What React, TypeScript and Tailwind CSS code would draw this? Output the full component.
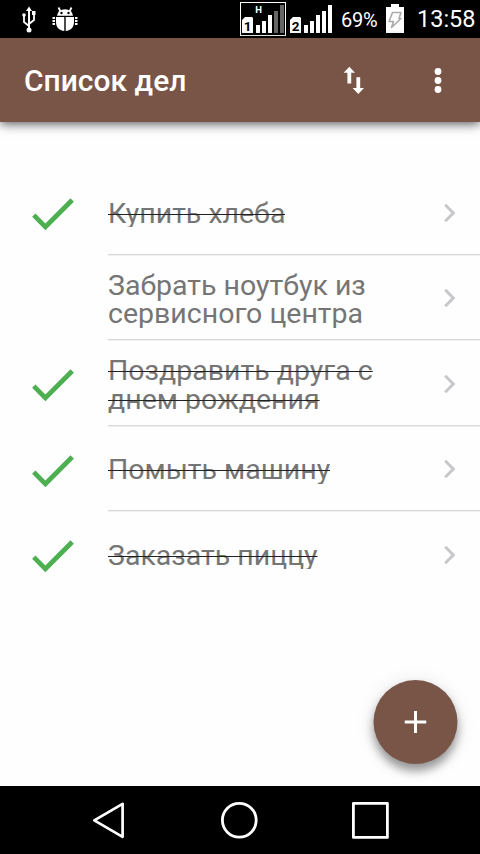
import { clsx } from "clsx";

type Task = { id: string; lines: string[]; done: boolean };

const TASKS: Task[] = [
	{ id: "bread", lines: ["Купить хлеба"], done: true },
	{
		id: "laptop",
		lines: ["Забрать ноутбук из", "сервисного центра"],
		done: false,
	},
	{
		id: "birthday",
		lines: ["Поздравить друга с", "днем рождения"],
		done: true,
	},
	{ id: "car", lines: ["Помыть машину"], done: true },
	{ id: "pizza", lines: ["Заказать пиццу"], done: true },
];

function UsbIcon() {
	return (
		<svg className="h-[27px] w-4" viewBox="0 0 16 27" fill="none" stroke="#fff">
			<path d="M8 3v20" strokeWidth={2} />
			<path d="M8 20l-5-4V9M8 18l5-4V8" strokeWidth={1.8} />
			<path d="M8 .5l3 4.500H5z" fill="#fff" stroke="none" />
			<circle cx="8" cy="24" r="2.500" fill="#fff" stroke="none" />
			<circle cx="3" cy="9" r="1.800" fill="#fff" stroke="none" />
			<path d="M11 5h3.500v4H11z" fill="#fff" stroke="none" />
		</svg>
	);
}

function BugIcon() {
	return (
		<svg className="h-[26px] w-[26px]" viewBox="0 0 26 26" fill="#fff">
			<path d="M5 9.800a8 6.500 0 0 1 16 0z" />
			<path d="M8.500 5.500L6.500 1.500M17.500 5.500l2-4" stroke="#fff" strokeWidth={1.8} />
			<path d="M4 11h8.300v14C7 24.500 4 21 4 16zM13.700 11H22v5c0 5-3 8.500-8.300 9z" />
			<path
				d="M.5 12h2.500M.5 15h2.500M.5 18h2.500M23 12h2.500M23 15h2.500M23 18h2.500"
				stroke="#fff"
				strokeWidth={2}
			/>
			<circle cx="9.500" cy="7" r="1.200" fill="#000" />
			<circle cx="16.500" cy="7" r="1.200" fill="#000" />
		</svg>
	);
}

function Signal({ sim, dim }: { sim: string; dim?: boolean }) {
	return (
		<svg className="h-[34px] w-[46px]" viewBox="0 0 46 34" fill="#fff">
			{dim && (
				<>
					<rect x=".5" y=".5" width="45" height="33" fill="none" stroke="#fff" />
					<text x="18.500" y="10.500" fontSize="9.500" fontWeight="700" textAnchor="middle">
						H
					</text>
				</>
			)}
			<path d="M5 15h7l1 1v15H2V18z" />
			<text
				x="7.500"
				y="28.500"
				fill="#000"
				fontSize="13.500"
				fontWeight="700"
				textAnchor="middle"
			>
				{sim}
			</text>
			<path d="M16 23h4v8h-4zM22 19h4v12h-4zM28 13h4v18h-4z" />
			<path d="M34 9h4v22h-4zM40 3h4v28h-4z" fill={dim ? "#666" : "#fff"} />
		</svg>
	);
}

function StatusBar() {
	return (
		<div className="flex h-[38px] shrink-0 items-center bg-black text-white">
			<div className="ml-[21px] flex items-center gap-[15px]">
				<UsbIcon />
				<BugIcon />
			</div>
			<div className="ml-auto flex items-center">
				<Signal sim="1" dim />
				<span className="ml-0.5 flex">
					<Signal sim="2" />
				</span>
				<span className="ml-[7px] w-[37px] whitespace-nowrap pt-0.5 text-[20px] tracking-[-0.3px]">
					69%
				</span>
				<svg className="ml-[8px] h-[30px] w-[18px]" viewBox="0 0 18 30">
					<path d="M5 0h8v3h5v26H0V3h5z" fill="#fff" />
					<path
						d="M6.500 8.500H15l-2 6h2L5.500 23.500l2-6H3z"
						fill="none"
						stroke="#aaa"
						strokeWidth={1.6}
						strokeLinejoin="round"
					/>
				</svg>
				<span className="ml-[13px] w-[63px] whitespace-nowrap pt-0.5 text-[23.5px]">13:58</span>
			</div>
		</div>
	);
}

function AppBar() {
	return (
		<header className="z-10 flex h-[84px] shrink-0 items-center bg-[#795548] pl-6 text-white shadow-[0_2px_10px_rgba(0,0,0,0.65)]">
			<h1 className="pt-px text-[30px] leading-9 font-medium">Список дел</h1>
			<svg className="ml-auto h-7 w-[22px]" viewBox="0 0 22 28" fill="#fff">
				<path d="M6.300 .8l5.700 6H8.200V17.500H4.400V6.800H.6zM15.300 28l-5.700-6h3.800V11.300h3.800V22H21z" />
			</svg>
			<svg className="mr-[38px] ml-[69px] h-[26px] w-2" viewBox="0 0 8 26" fill="#fff">
				<circle cx="4" cy="4.500" r="3.400" />
				<circle cx="4" cy="13.500" r="3.400" />
				<circle cx="4" cy="22.500" r="3.400" />
			</svg>
		</header>
	);
}

function TaskRow({ task, last }: { task: Task; last: boolean }) {
	return (
		<li className="flex h-[85.5px] shrink-0 pl-6">
			<div className="flex w-[84px] items-center pt-[3px]">
				{task.done && (
					<svg className="h-[57px] w-[57px]" viewBox="0 0 24 24" fill="#4caf50">
						<path d="M9 16.170L4.830 12l-1.420 1.410L9 19 21 7l-1.410-1.410z" />
					</svg>
				)}
			</div>
			<div
				className={clsx(
					"flex flex-1 items-center justify-between border-b pt-[3px] pr-6",
					last ? "border-transparent" : "border-[#d8d8d8] shadow-[0_1px_0_#f0f0f0]",
				)}
			>
				<p
					className={clsx(
						"overflow-hidden pt-px text-[28.5px] leading-[28.5px] whitespace-nowrap text-[#757575]",
						task.lines.length > 1 && "mt-[1.5px]",
					)}
				>
					{task.lines.map((line) => (
						<span
							key={line}
							className={clsx(
								"block last:-mb-px",
								task.done && "line-through decoration-[#212121] decoration-[1.25px]",
							)}
						>
							{line}
						</span>
					))}
				</p>
				<svg className="mb-px h-5 w-3" viewBox="0 0 12 20" fill="none">
					<path d="M1.200 1.700L9.300 10l-8.100 8.300" stroke="#c7c7cc" strokeWidth={3} />
				</svg>
			</div>
		</li>
	);
}

function NavBar() {
	return (
		<nav className="z-10 flex h-[68px] shrink-0 items-center bg-black pl-[92px]">
			<svg className="h-[38px] w-[33px]" viewBox="0 0 33 38" fill="none">
				<path d="M30.600 2.800v33L2.300 19.300z" stroke="#fff" strokeWidth={2.7} strokeLinejoin="round" />
			</svg>
			<svg className="ml-[95px] h-[38px] w-[38px]" viewBox="0 0 38 38" fill="none">
				<circle cx="19.300" cy="19.300" r="16.900" stroke="#fff" strokeWidth={2.8} />
			</svg>
			<svg className="ml-[93px] h-[38px] w-[38px]" viewBox="0 0 38 38" fill="none">
				<path d="M2.400 2.400h34v34h-34z" stroke="#fff" strokeWidth={2.8} strokeLinejoin="round" />
			</svg>
		</nav>
	);
}

export default function App() {
	return (
		<div className="flex h-[854px] w-[480px] flex-col overflow-hidden bg-[#fefefe] font-[Roboto,sans-serif]">
			<StatusBar />
			<AppBar />
			<main className="relative flex-1">
				<ul className="flex flex-col pt-[47.3px]">
					{TASKS.map((task, i) => (
						<TaskRow key={task.id} task={task} last={i === TASKS.length - 1} />
					))}
				</ul>
				<button className="absolute right-[23px] bottom-[22px] flex h-[84px] w-[84px] translate-x-[0.5px] items-center justify-center rounded-full bg-[#795548] shadow-[0_7px_10px_rgba(0,0,0,0.38),0_2px_20px_rgba(0,0,0,0.1)]">
					<svg className="h-[22px] w-[22px]" viewBox="0 0 22 22" fill="#fff">
						<path d="M9.500 0h3v9.500H22v3h-9.500V22h-3v-9.500H0v-3h9.500z" />
					</svg>
				</button>
			</main>
			<NavBar />
		</div>
	);
}
